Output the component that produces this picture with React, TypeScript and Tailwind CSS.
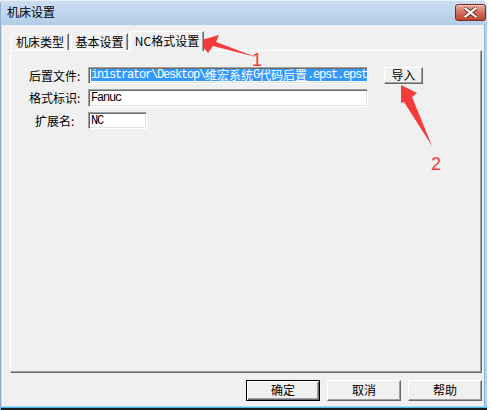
import React from "react";

const cjk = { fontFamily: '"Noto Sans CJK SC", "Liberation Sans", sans-serif' };
const mono = { fontFamily: '"Liberation Mono", "Noto Sans CJK SC", monospace' };

function RaisedButton({ label, w, h, isDefault }: { label: string; w: string; h: string; isDefault?: boolean }) {
  const base =
    "flex items-center justify-center bg-[#f0f0f0] text-[12px] leading-none text-black " + w + " " + h;
  if (isDefault) {
    return (
      <div className={base + " border border-black shadow-[inset_1px_1px_#ffffff,inset_-1px_-1px_#696969,inset_-2px_-2px_#a0a0a0]"}>
        <span className="pb-px">{label}</span>
      </div>
    );
  }
  return (
    <div
      className={
        base +
        " border border-t-white border-l-white border-r-[#696969] border-b-[#696969] shadow-[inset_-1px_-1px_#a0a0a0]"
      }
    >
      <span className="pb-px">{label}</span>
    </div>
  );
}

function Sunken({ w, h, children }: { w: string; h: string; children?: React.ReactNode }) {
  return (
    <div
      className={
        "bg-white overflow-hidden border border-t-[#a0a0a0] border-l-[#a0a0a0] border-r-white border-b-white shadow-[inset_1px_1px_#696969,inset_-1px_-1px_#e3e3e3] pl-[2px] pt-px " +
        w +
        " " +
        h
      }
    >
      {children}
    </div>
  );
}

export default function App() {
  return (
    <div className="relative w-[491px] h-[410px] bg-white overflow-hidden" style={cjk}>
      <div className="w-[487px] h-[410px] flex flex-col bg-[#b9d1ea] rounded-tr-[6px] rounded-tl-[4px] border-l border-[#8fb0d4] overflow-hidden">
        {/* Title bar */}
        <div className="h-[25px] flex items-center justify-between pl-[6px] pr-[1px] bg-gradient-to-b from-[#cddff2] to-[#b4cce7] shadow-[inset_0_1px_#e8f1fa]">
          <span className="text-[12px] leading-none text-black pb-px">机床设置</span>
          <div className="w-[31px] h-[17px] rounded-[3px] border border-[#7a2a22] bg-gradient-to-b from-[#e9a99b] via-[#d0705e] to-[#c0402c] flex items-center justify-center shadow-[inset_0_1px_#f4c8bd]">
            <svg width="13" height="11" viewBox="0 0 13 11">
              <path
                d="M1.5 1.5 L11.5 9.5 M11.5 1.5 L1.5 9.5"
                stroke="#6b2a20"
                strokeWidth="4"
                strokeLinecap="square"
                fill="none"
              />
              <path
                d="M1.5 1.5 L11.5 9.5 M11.5 1.5 L1.5 9.5"
                stroke="#ffffff"
                strokeWidth="2.2"
                strokeLinecap="square"
                fill="none"
              />
            </svg>
          </div>
        </div>

        {/* Frame body */}
        <div className="flex-1 flex">
          <div className="w-[2px] bg-[#b9d1ea] border-r border-white" />
          <div className="flex-1 bg-[#f0f0f0] flex flex-col pt-[6px] pl-[7px] pr-[2px]">
            {/* Tabs */}
            <div className="relative z-10 h-[19px] flex items-end text-[12px] leading-none text-black">
              <div className="ml-px w-[58px] h-[17px] flex items-center justify-center border-t border-l border-white rounded-tl-[2px] border-r border-r-[#696969] shadow-[inset_-1px_0_#a0a0a0] bg-[#f0f0f0]">
                机床类型
              </div>
              <div className="ml-[2px] w-[57px] h-[17px] flex items-center justify-center border-t border-l border-white rounded-tl-[2px] border-r border-r-[#696969] shadow-[inset_-1px_0_#a0a0a0] bg-[#f0f0f0]">
                基本设置
              </div>
              <div className="ml-[2px] -mb-px w-[74px] h-[20px] flex items-center justify-center border-t border-l border-white rounded-tl-[2px] border-r border-r-[#696969] shadow-[inset_-1px_0_#a0a0a0] bg-[#f0f0f0] pb-px">
                NC格式设置
              </div>
            </div>

            {/* Panel */}
            <div className="h-[323px] flex flex-col pt-[16px] border border-t-white border-l-white border-r-[#696969] border-b-[#696969] shadow-[inset_-1px_-1px_#a0a0a0] text-[12px] leading-none text-black">
              <div className="flex items-center h-[17px]">
                <div className="w-[77px] pl-[18px]">后置文件:</div>
                <Sunken w="w-[280px]" h="h-[17px]">
                  <div className="flex items-center h-[12px] whitespace-nowrap">
                    <span className="bg-[#3399ff] text-white h-[12px] flex items-center text-[12px] tracking-[-1.2px]" style={mono}>
                      inistrator\Desktop\
                      <span className="text-[12px] tracking-normal" style={cjk}>维宏系统</span>
                      G
                      <span className="text-[12px] tracking-normal" style={cjk}>代码后置</span>
                      .epst.epst
                    </span>
                  </div>
                </Sunken>
                <div className="ml-[16px]">
                  <RaisedButton label="导入" w="w-[39px]" h="h-[17px]" />
                </div>
              </div>

              <div className="flex items-center h-[18px] mt-[5px]">
                <div className="w-[77px] pl-[18px]">格式标识:</div>
                <Sunken w="w-[280px]" h="h-[18px]">
                  <div className="h-[14px] flex items-center text-[12px] tracking-[-1.2px]" style={mono}>
                    Fanuc
                  </div>
                </Sunken>
              </div>

              <div className="flex items-center h-[17px] mt-[5px]">
                <div className="w-[77px] pl-[24px]">扩展名:</div>
                <Sunken w="w-[59px]" h="h-[17px]">
                  <div className="h-[13px] flex items-center text-[12px] tracking-[-1.2px]" style={mono}>
                    NC
                  </div>
                </Sunken>
              </div>
            </div>

            {/* Bottom buttons */}
            <div className="flex justify-end gap-[7px] mt-[7px]">
              <RaisedButton label="确定" w="w-[74px]" h="h-[21px]" isDefault />
              <RaisedButton label="取消" w="w-[74px]" h="h-[21px]" />
              <RaisedButton label="帮助" w="w-[74px]" h="h-[21px]" />
            </div>
          </div>
          <div className="w-[3px] bg-[#b9d1ea] border-l border-[#7fb7df]" />
        </div>
        <div className="h-[4px] flex flex-col">
          <div className="h-px bg-[#b9d1ea]" />
          <div className="h-px bg-[#3fbde8]" />
          <div className="h-[2px] bg-[#1b1b1b]" />
        </div>
      </div>

      {/* Annotation arrows */}
      <svg className="absolute inset-0 pointer-events-none" width="491" height="410" viewBox="0 0 491 410">
        <polygon points="198,41 219,35 216,42 256,57 213,46 208,53" fill="#f53a3a" />
        <polygon points="401,85 417,93 412,97 432,146 404,102 401,103" fill="#f53a3a" />
        <text x="252" y="66" fontSize="18" fill="#f53a3a" fontFamily="Liberation Sans, sans-serif">1</text>
        <text x="431" y="170" fontSize="18" fill="#f53a3a" fontFamily="Liberation Sans, sans-serif">2</text>
      </svg>
    </div>
  );
}
